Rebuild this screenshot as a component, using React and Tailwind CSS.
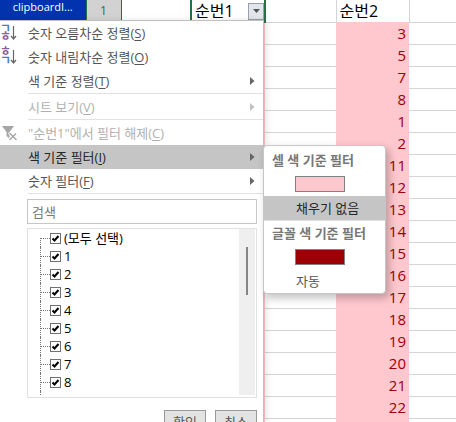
import React, { useState } from 'react';
import clsx from 'clsx';

const sheetRows = [3, 5, 7, 8, 1, 2, 11, 12, 13, 14, 15, 16, 17, 18, 19, 20, 21, 22, ''];
const filterValues = ['(모두 선택)', '1', '2', '3', '4', '5', '6', '7', '8', '9'];

const SortIcon = ({ descending }) => (
  <svg className="overflow-visible font-['Noto_Sans_CJK_KR',sans-serif]" width="18" height="18" viewBox="0 0 18 18" fontSize="12" fontWeight="700">
    <text x="-1" y={descending ? 8 : 9} fill={descending ? '#8c5a9e' : '#4a7ebb'}>{descending ? 'ㅎ' : 'ㄱ'}</text>
    <text x="-1" y="17" fill={descending ? '#4a7ebb' : '#8c5a9e'}>{descending ? 'ㄱ' : 'ㅎ'}</text>
    <path d="M12.500 2v13M10 12l2.500 3 2.500-3" fill="none" stroke="#666" strokeWidth="1.200" />
  </svg>
);

const ClearFilterIcon = () => (
  <svg width="18" height="18" viewBox="0 0 18 18">
    <path d="M1 2h12L8.500 8v6.500L5.500 12V8z" fill="#a6a6a6" />
    <path d="M8 8.500l7.500 7.500M15.500 9l-7 7" stroke="#fff" strokeWidth="3" />
    <path d="M8.500 9l7 7M15 9.500l-6.500 6.500" stroke="#a6a6a6" strokeWidth="1.400" />
  </svg>
);

const MenuItem = ({ icon, label, accessKey, disabled, active, submenu }) => (
  <li>
    <button
      type="button"
      disabled={disabled}
      aria-haspopup={submenu ? 'menu' : undefined}
      className={clsx(
        'flex h-6 w-full items-center text-left text-[13px] leading-6',
        disabled ? 'text-[#b1b1b1]' : active ? 'bg-[#c5c5c5] text-[#262626]' : 'text-[#555]'
      )}
    >
      <span className="flex w-7 shrink-0 pl-px">{icon}</span>
      <span className="flex-1 whitespace-nowrap">{label}(<u className="underline-offset-2">{accessKey}</u>)</span>
      {submenu && (
        <svg className="mr-2" width="5" height="8" viewBox="0 0 5 8">
          <path d="M0 0l4.500 4L0 8z" fill={disabled ? '#c0c0c0' : '#666'} />
        </svg>
      )}
    </button>
  </li>
);

const Separator = () => <li role="separator" className="ml-7 h-0.5 border-t border-[#e1e1e1]" />;

const FilterList = () => {
  const [checked, setChecked] = useState(filterValues);

  const toggle = (value) => {
    setChecked(checked.includes(value) ? checked.filter((v) => v !== value) : [...checked, value]);
  };

  return (
    <div className="ml-[27px] mr-1.5 mt-1 flex h-[170px] border border-[#e1e1e1] pb-0.5 pr-px">
      <ul className="flex-1 overflow-hidden pl-3">
        {filterValues.map((value, i) => (
          <li key={value} className="flex h-[18px]">
            <span className={clsx('w-px border-l border-dotted border-[#777]', i === 0 && 'mt-[9px]')} />
            <label className="flex items-center text-[13px] leading-[18px] text-black">
              <span className="w-[9px] border-t border-dotted border-[#777]" />
              <span className="grid size-[11px] place-items-center">
                <input
                  type="checkbox"
                  checked={checked.includes(value)}
                  onChange={() => toggle(value)}
                  className="peer col-start-1 row-start-1 size-[11px] appearance-none border border-[#707070] bg-white"
                />
                <svg className="pointer-events-none invisible col-start-1 row-start-1 peer-checked:visible" width="9" height="9" viewBox="0 0 9 9">
                  <path d="M1.500 4.500l2 2L7.500 2" fill="none" stroke="#000" strokeWidth="2" />
                </svg>
              </span>
              <span className="pl-[3px]">{value}</span>
            </label>
          </li>
        ))}
      </ul>
      <div className="flex w-4 justify-center bg-[#efefef] pt-[18px]">
        <div className="h-12 w-0.5 bg-[#858585]" />
      </div>
    </div>
  );
};

const ColorMenu = () => (
  <div className="absolute left-[263px] top-[125px] w-[123px] rounded border border-[#c6c6c6] bg-white pt-0.5 text-[13px] leading-6 text-[#555] shadow-[3px_4px_8px_rgba(0,0,0,0.25)]">
    <div className="px-2 font-bold text-[#777]">셀 색 기준 필터</div>
    <button type="button" aria-label="분홍색" className="flex h-6 w-full items-center pl-[31px]">
      <span className="h-4 w-[50px] border border-[#808080] bg-[#ffc7ce]" />
    </button>
    <button type="button" className="block h-6 w-full bg-[#c5c5c5] pl-8 text-left text-[#262626]">채우기 없음</button>
    <div className="border-t border-[#e1e1e1] px-2 font-bold text-[#777]">글꼴 색 기준 필터</div>
    <button type="button" aria-label="진한 빨강" className="flex h-6 w-full items-center pl-[31px]">
      <span className="h-4 w-[50px] border border-[#808080] bg-[#9c0006]" />
    </button>
    <button type="button" className="block h-6 w-full pl-8 text-left">자동</button>
  </div>
);

const FilterMenu = () => (
  <div className="absolute bottom-0 left-0 top-5 w-[264px]">
    <div className="h-full overflow-hidden border-r border-t border-[#c0c0c0] bg-white shadow-[3px_0_6px_rgba(0,0,0,0.1)]">
      <ul>
        <MenuItem icon={<SortIcon />} label="숫자 오름차순 정렬" accessKey="S" />
        <MenuItem icon={<SortIcon descending />} label="숫자 내림차순 정렬" accessKey="O" />
        <MenuItem label="색 기준 정렬" accessKey="T" submenu />
        <Separator />
        <MenuItem label="시트 보기" accessKey="V" submenu disabled />
        <Separator />
        <MenuItem icon={<ClearFilterIcon />} label={'"순번1"에서 필터 해제'} accessKey="C" disabled />
        <MenuItem label="색 기준 필터" accessKey="I" submenu active />
        <MenuItem label="숫자 필터" accessKey="F" submenu />
        <Separator />
      </ul>
      <div className="ml-[27px] mr-1.5 mt-1">
        <input
          type="text"
          aria-label="검색"
          placeholder="검색"
          className="block h-[25px] w-full border border-[#c6c6c6] px-1 text-[13px] placeholder:text-[#777]"
        />
      </div>
      <FilterList />
      <div className="mr-1.5 mt-3 flex justify-end gap-[9px] text-[13px] leading-5 text-[#555]">
        <button type="button" className="h-6 w-[42px] border border-[#999] bg-[#e3e3e3]">확인</button>
        <button type="button" className="h-6 w-[42px] border border-[#999] bg-[#e3e3e3]">취소</button>
      </div>
    </div>
    <ColorMenu />
  </div>
);

const App = () => {
  return (
    <main className="relative h-screen overflow-hidden bg-white font-['Open_Sans','Noto_Sans_CJK_KR',sans-serif]">
      <table className="w-full table-fixed border-collapse text-base leading-5">
        <colgroup>
          <col className="w-[86px]" />
          <col className="w-[35px]" />
          <col className="w-[70px]" />
          <col className="w-[74px]" />
          <col className="w-[71px]" />
          <col className="w-[73px]" />
          <col />
        </colgroup>
        <thead>
          <tr className="h-[22px] text-left">
            <td className="overflow-hidden bg-[#0033ad] p-0 text-center align-top text-[11px] leading-[14px] text-white">clipboardI...</td>
            <th className="border-x border-[#217346] bg-[#d2d2d2] p-0 text-center text-xs font-normal text-[#217346]">1</th>
            <td className="p-0" />
            <th className="border-x-2 border-[#217346] p-0 font-normal">
              <div className="flex items-center justify-between pl-[3px]">
                순번1
                <button type="button" aria-label="필터" className="grid h-[17px] w-4 place-items-center border border-[#9a9fa8] bg-[#e2e6ec]">
                  <svg width="7" height="4" viewBox="0 0 7 4"><path d="M0 0h7L3.500 4z" fill="#555" /></svg>
                </button>
              </div>
            </th>
            <td className="border-b border-[#d4d4d4] p-0" />
            <th className="border-x border-[#d4d4d4] p-0 pl-[3px] font-normal">순번2</th>
            <td className="border-b border-[#d4d4d4] p-0" />
          </tr>
        </thead>
        <tbody>
          {sheetRows.map((n) => (
            <tr key={n} className="h-[22px]">
              <td className="p-0" colSpan={3} />
              <td className="bg-[#ffc7ce] p-0" />
              <td className="border-b border-[#d4d4d4] p-0" />
              <td className="bg-[#ffc7ce] p-0 pr-[3px] text-right text-[15px] text-[#9c0006]">{n}</td>
              <td className="border-b border-[#d4d4d4] p-0" />
            </tr>
          ))}
        </tbody>
      </table>
      <FilterMenu />
    </main>
  );
};

export default App;
